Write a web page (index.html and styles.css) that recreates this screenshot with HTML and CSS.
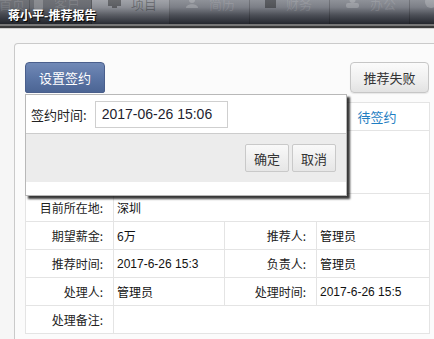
FILE: index.html
```html
<!DOCTYPE html>
<html lang="zh">
<head>
<meta charset="utf-8">
<title>蒋小平-推荐报告</title>
<link rel="stylesheet" href="styles.css">
</head>
<body>
<header class="topbar">
  <nav class="nav">
    <div class="tab tab-dark tab-first"><span class="tab-text">首页</span></div>
    <div class="tab tab-dark tab-second">
      <svg class="ico" width="11" height="12" viewBox="0 0 11 12"><rect x="1" y="0" width="9" height="11" rx="1" fill="currentColor"/></svg>
      <span class="tab-text">客户</span>
    </div>
    <div class="tab tab-active">
      <svg class="ico ico-dark" width="13" height="10" viewBox="0 0 13 10"><rect x="0" y="0" width="13" height="8" fill="currentColor"/><rect x="4" y="8" width="5" height="2" fill="currentColor"/></svg>
      <span class="tab-text text-dark">项目</span>
    </div>
    <div class="tab">
      <svg class="ico" width="14" height="10" viewBox="0 0 14 10"><circle cx="7" cy="2" r="3" fill="currentColor"/><path d="M1 10 C1 5 13 5 13 10 Z" fill="currentColor"/></svg>
      <span class="tab-text">简历</span>
    </div>
    <div class="tab">
      <svg class="ico ico-dark" width="11" height="10" viewBox="0 0 11 10"><rect x="0" y="0" width="11" height="10" fill="currentColor"/></svg>
      <span class="tab-text">财务</span>
    </div>
    <div class="tab">
      <svg class="ico" width="15" height="10" viewBox="0 0 15 10"><circle cx="7.5" cy="2" r="3" fill="currentColor"/><rect x="1" y="5" width="13" height="5" rx="2" fill="currentColor"/></svg>
      <span class="tab-text">办公</span>
    </div>
    <div class="tab tab-last">
      <svg class="ico" width="14" height="12" viewBox="0 0 14 12"><circle cx="7" cy="4" r="6" fill="currentColor"/></svg>
    </div>
  </nav>
  <h1 class="title">蒋小平-推荐报告</h1>
</header>

<main class="panel">
  <div class="toolbar">
    <button class="btn-primary">设置签约</button>
    <button class="btn-plain">推荐失败</button>

    <div class="popup">
      <div class="popup-row">
        <span class="popup-label">签约时间:</span>
        <input class="popup-input" type="text" value="2017-06-26 15:06">
      </div>
      <div class="popup-actions">
        <button class="btn-small">确定</button>
        <button class="btn-small">取消</button>
      </div>
      <div class="popup-foot"></div>
    </div>
  </div>

  <table class="report">
    <colgroup>
      <col class="c1"><col class="c2"><col class="c3"><col class="c4">
    </colgroup>
    <tr>
      <td class="lbl">推荐职位:</td>
      <td class="val" colspan="2">Java开发工程师</td>
      <td class="status">待签约</td>
    </tr>
    <tr class="tall">
      <td class="lbl">推荐公司:</td>
      <td class="val" colspan="3">深圳科技有限公司</td>
    </tr>
    <tr>
      <td class="lbl">目前所在地:</td>
      <td class="val" colspan="3">深圳</td>
    </tr>
    <tr>
      <td class="lbl">期望薪金:</td>
      <td class="val">6万</td>
      <td class="lbl">推荐人:</td>
      <td class="val">管理员</td>
    </tr>
    <tr>
      <td class="lbl">推荐时间:</td>
      <td class="val num">2017-6-26 15:3</td>
      <td class="lbl">负责人:</td>
      <td class="val">管理员</td>
    </tr>
    <tr>
      <td class="lbl">处理人:</td>
      <td class="val">管理员</td>
      <td class="lbl">处理时间:</td>
      <td class="val num">2017-6-26 15:5</td>
    </tr>
    <tr>
      <td class="lbl">处理备注:</td>
      <td class="val" colspan="3"></td>
    </tr>
  </table>
</main>
</body>
</html>
```

FILE: styles.css
```css
* { box-sizing: border-box; }

html, body {
  margin: 0;
  padding: 0;
}

body {
  width: 434px;
  height: 339px;
  overflow: hidden;
  background: #f6f6f6;
  font-family: "Noto Sans CJK SC", "Liberation Sans", sans-serif;
  color: #333;
}

/* ---------- header ---------- */
.topbar {
  position: relative;
  height: 26px;
  background: linear-gradient(to bottom, #8f9299 0%, #7c7f87 30%, #4d5058 62%, #24272e 100%);
  border-bottom: 2px solid #777;
  box-shadow: 0 2px 0 #3a3a3a, 0 3px 0 #cfcfcf;
  overflow: hidden;
}

.nav {
  display: flex;
  height: 24px;
}

.tab {
  width: 80px;
  flex: none;
  display: flex;
  align-items: flex-start;
  padding-left: 15px;
  border-right: 1px solid rgba(0, 0, 0, 0.18);
  color: rgba(255, 255, 255, 0.2);
}

.tab-dark {
  background: linear-gradient(to bottom, rgba(0,0,0,0.22), rgba(0,0,0,0.05));
}

.tab-first {
  width: 30px;
  padding-left: 0;
  justify-content: flex-end;
}

.tab-first .tab-text { margin-left: 0; margin-right: 4px; }

.tab-second {
  width: 62px;
  padding-left: 3px;
}

.tab-active {
  width: 78px;
  padding-left: 16px;
  background: linear-gradient(to bottom, rgba(255,255,255,0.16), rgba(255,255,255,0.02));
}

.tab-last { width: 40px; padding-left: 14px; border-right: none; }

.ico {
  flex: none;
  margin-top: -2px;
}

.ico-dark { color: rgba(0, 0, 0, 0.35); }

.tab-text {
  margin-left: 10px;
  margin-top: -3px;
  font-size: 13px;
  line-height: 14px;
  color: rgba(255, 255, 255, 0.13);
  white-space: nowrap;
}

.text-dark { color: rgba(0, 0, 0, 0.3); }

.title {
  position: absolute;
  left: 8px;
  top: 8px;
  margin: 0;
  font-size: 12px;
  line-height: 14px;
  font-weight: bold;
  color: #fff;
  text-shadow: 1px 1px 1px #000;
}

/* ---------- panel ---------- */
.panel {
  display: block;
  margin: 17px 0 0 14px;
  width: 440px;
  height: 296px;
  padding: 18px 10px 0 10px;
  background: #fbfbfb;
  border: 1px solid #cacaca;
  border-bottom: none;
  border-radius: 4px 0 0 0;
}

.toolbar {
  position: relative;
  width: 404px;
  height: 31px;
  display: flex;
  justify-content: space-between;
}

button {
  font-family: "Noto Sans CJK SC", sans-serif;
  cursor: pointer;
}

.btn-primary {
  width: 80px;
  height: 31px;
  padding: 0;
  font-size: 13px;
  color: #fff;
  background: linear-gradient(to bottom, #7189b6 0%, #5a74a4 55%, #4c6594 100%);
  border: 1px solid #4a5f8c;
  border-radius: 4px 4px 2px 2px;
}

.btn-plain {
  width: 79px;
  height: 31px;
  padding: 0;
  font-size: 13px;
  color: #333;
  background: linear-gradient(to bottom, #fbfbfb 0%, #eeeeee 60%, #e2e2e2 100%);
  border: 1px solid #c6c6c6;
  border-radius: 4px;
  box-shadow: 0 1px 1px rgba(0,0,0,0.08);
}

/* ---------- popup ---------- */
.popup {
  position: absolute;
  left: 0;
  top: 32px;
  z-index: 2;
  width: 322px;
  background: #fff;
  border: 1px solid #b8b8b8;
  box-shadow: 3px 3px 2px rgba(0, 0, 0, 0.78);
}

.popup-row {
  display: flex;
  align-items: center;
  height: 39px;
  padding: 0 5px;
  border-bottom: 1px solid #cccccc;
}

.popup-label {
  font-size: 13px;
  color: #222;
}

.popup-input {
  margin-left: 8px;
  width: 133px;
  height: 27px;
  padding: 0 0 0 6px;
  border: 1px solid #cfcfcf;
  background: #fff;
  font-family: "Liberation Sans", sans-serif;
  font-size: 14px;
  color: #1e1e30;
  outline: none;
}

.popup-actions {
  display: flex;
  justify-content: flex-end;
  gap: 3px;
  padding: 10px 10px 10px 0;
  background: #ececec;
}

.btn-small {
  width: 44px;
  height: 28px;
  padding: 0;
  font-size: 13px;
  color: #333;
  background: linear-gradient(to bottom, #f9f9f9, #e6e6e6);
  border: 1px solid #c9c9c9;
  border-radius: 2px;
}

.popup-foot {
  height: 13px;
  background: #fff;
}

/* ---------- table ---------- */
.report {
  margin-top: 9px;
  width: 404px;
  border-collapse: collapse;
  table-layout: fixed;
  background: #fff;
  border: 1px solid #cfcfcf;
  font-size: 12px;
}

.c1 { width: 88px; }
.c2 { width: 111px; }
.c3 { width: 92px; }
.c4 { width: 113px; }

.report td {
  height: 28px;
  padding: 0;
  border: 1px solid #e4e4e4;
  white-space: nowrap;
  overflow: hidden;
}

.report tr.tall td { height: 63px; }

.lbl {
  text-align: right;
  padding-right: 10px !important;
  color: #222;
}

.val {
  padding-left: 3px !important;
  color: #111;
}

.num {
  font-family: "Liberation Sans", sans-serif;
  color: #111;
}

.status {
  text-align: center;
  padding-left: 8px !important;
  font-size: 13px;
  color: #1f7ec2;
}
```
